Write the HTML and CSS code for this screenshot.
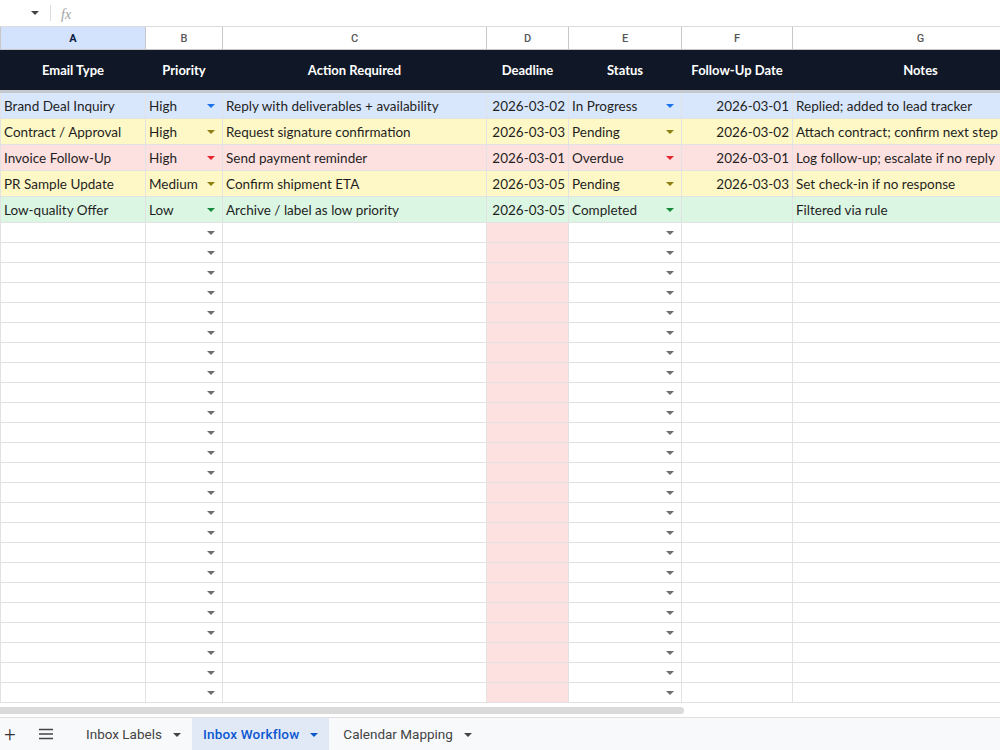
FILE: index.html
```html
<!DOCTYPE html>
<html lang="en">
<head>
    <meta charset="UTF-8">
    <title>Inbox Workflow</title>
    <link rel="stylesheet" href="styles.css">
</head>
<body>
    <div class="formula-bar">
        <span class="name-caret"></span>
        <span class="fx-divider"></span>
        <span class="fx">fx</span>
    </div>

    <div class="sheet">
        <table class="grid">
            <colgroup>
                <col style="width:145px">
                <col style="width:77px">
                <col style="width:264px">
                <col style="width:82px">
                <col style="width:113px">
                <col style="width:111px">
                <col style="width:256px">
            </colgroup>
            <tr class="letters">
                <th class="selected">A</th><th>B</th><th>C</th><th>D</th><th>E</th><th>F</th><th>G</th>
            </tr>
            <tr class="head">
                <th>Email Type</th><th>Priority</th><th>Action Required</th><th>Deadline</th><th>Status</th><th>Follow-Up Date</th><th>Notes</th>
            </tr>
            <tr class="row blue">
                <td>Brand Deal Inquiry</td>
                <td class="dd">High</td>
                <td>Reply with deliverables + availability</td>
                <td class="num">2026-03-02</td>
                <td class="dd">In Progress</td>
                <td class="num">2026-03-01</td>
                <td>Replied; added to lead tracker</td>
            </tr>
            <tr class="row yellow">
                <td>Contract / Approval</td>
                <td class="dd">High</td>
                <td>Request signature confirmation</td>
                <td class="num">2026-03-03</td>
                <td class="dd">Pending</td>
                <td class="num">2026-03-02</td>
                <td>Attach contract; confirm next step</td>
            </tr>
            <tr class="row red">
                <td>Invoice Follow-Up</td>
                <td class="dd">High</td>
                <td>Send payment reminder</td>
                <td class="num">2026-03-01</td>
                <td class="dd">Overdue</td>
                <td class="num">2026-03-01</td>
                <td>Log follow-up; escalate if no reply</td>
            </tr>
            <tr class="row yellow">
                <td>PR Sample Update</td>
                <td class="dd">Medium</td>
                <td>Confirm shipment ETA</td>
                <td class="num">2026-03-05</td>
                <td class="dd">Pending</td>
                <td class="num">2026-03-03</td>
                <td>Set check-in if no response</td>
            </tr>
            <tr class="row green">
                <td>Low-quality Offer</td>
                <td class="dd">Low</td>
                <td>Archive / label as low priority</td>
                <td class="num">2026-03-05</td>
                <td class="dd">Completed</td>
                <td class="num"></td>
                <td>Filtered via rule</td>
            </tr>
            <tr class="empty"><td></td><td class="dd"></td><td></td><td class="due"></td><td class="dd"></td><td></td><td></td></tr>
            <tr class="empty"><td></td><td class="dd"></td><td></td><td class="due"></td><td class="dd"></td><td></td><td></td></tr>
            <tr class="empty"><td></td><td class="dd"></td><td></td><td class="due"></td><td class="dd"></td><td></td><td></td></tr>
            <tr class="empty"><td></td><td class="dd"></td><td></td><td class="due"></td><td class="dd"></td><td></td><td></td></tr>
            <tr class="empty"><td></td><td class="dd"></td><td></td><td class="due"></td><td class="dd"></td><td></td><td></td></tr>
            <tr class="empty"><td></td><td class="dd"></td><td></td><td class="due"></td><td class="dd"></td><td></td><td></td></tr>
            <tr class="empty"><td></td><td class="dd"></td><td></td><td class="due"></td><td class="dd"></td><td></td><td></td></tr>
            <tr class="empty"><td></td><td class="dd"></td><td></td><td class="due"></td><td class="dd"></td><td></td><td></td></tr>
            <tr class="empty"><td></td><td class="dd"></td><td></td><td class="due"></td><td class="dd"></td><td></td><td></td></tr>
            <tr class="empty"><td></td><td class="dd"></td><td></td><td class="due"></td><td class="dd"></td><td></td><td></td></tr>
            <tr class="empty"><td></td><td class="dd"></td><td></td><td class="due"></td><td class="dd"></td><td></td><td></td></tr>
            <tr class="empty"><td></td><td class="dd"></td><td></td><td class="due"></td><td class="dd"></td><td></td><td></td></tr>
            <tr class="empty"><td></td><td class="dd"></td><td></td><td class="due"></td><td class="dd"></td><td></td><td></td></tr>
            <tr class="empty"><td></td><td class="dd"></td><td></td><td class="due"></td><td class="dd"></td><td></td><td></td></tr>
            <tr class="empty"><td></td><td class="dd"></td><td></td><td class="due"></td><td class="dd"></td><td></td><td></td></tr>
            <tr class="empty"><td></td><td class="dd"></td><td></td><td class="due"></td><td class="dd"></td><td></td><td></td></tr>
            <tr class="empty"><td></td><td class="dd"></td><td></td><td class="due"></td><td class="dd"></td><td></td><td></td></tr>
            <tr class="empty"><td></td><td class="dd"></td><td></td><td class="due"></td><td class="dd"></td><td></td><td></td></tr>
            <tr class="empty"><td></td><td class="dd"></td><td></td><td class="due"></td><td class="dd"></td><td></td><td></td></tr>
            <tr class="empty"><td></td><td class="dd"></td><td></td><td class="due"></td><td class="dd"></td><td></td><td></td></tr>
            <tr class="empty"><td></td><td class="dd"></td><td></td><td class="due"></td><td class="dd"></td><td></td><td></td></tr>
            <tr class="empty"><td></td><td class="dd"></td><td></td><td class="due"></td><td class="dd"></td><td></td><td></td></tr>
            <tr class="empty"><td></td><td class="dd"></td><td></td><td class="due"></td><td class="dd"></td><td></td><td></td></tr>
            <tr class="empty"><td></td><td class="dd"></td><td></td><td class="due"></td><td class="dd"></td><td></td><td></td></tr>
        </table>
    </div>

    <div class="hscroll">
        <div class="thumb"></div>
    </div>

    <div class="tabbar">
        <span class="tab-icon plus">+</span>
        <span class="tab-icon menu">
            <svg width="14" height="12" viewBox="0 0 14 12"><path d="M0 1.5h14M0 6h14M0 10.5h14" stroke="#444" stroke-width="1.6"/></svg>
        </span>
        <div class="tab">Inbox Labels <span class="tab-caret"></span></div>
        <div class="tab active">Inbox Workflow <span class="tab-caret"></span></div>
        <div class="tab">Calendar Mapping <span class="tab-caret"></span></div>
    </div>
</body>
</html>
```

FILE: styles.css
```css
body {
    margin: 0;
    width: 1000px;
    height: 750px;
    overflow: hidden;
    background-color: #fff;
    font-family: Lato, "Open Sans", sans-serif;
    display: flex;
    flex-direction: column;
}

/* formula bar */
.formula-bar {
    height: 26px;
    flex-shrink: 0;
    display: flex;
    align-items: center;
    border-bottom: 1px solid #dadce0;
}
.name-caret {
    width: 0;
    height: 0;
    margin-left: 31px;
    border-left: 4px solid transparent;
    border-right: 4px solid transparent;
    border-top: 4px solid #444;
}
.fx-divider {
    width: 1px;
    height: 16px;
    margin-left: 11px;
    background-color: #dadce0;
}
.fx {
    margin-left: 10px;
    margin-top: 3px;
    font-family: "Liberation Serif", serif;
    font-style: italic;
    font-size: 14px;
    color: #a0a0a0;
}

/* grid */
.sheet {
    height: 678px;
    flex-shrink: 0;
    overflow: hidden;
}
.grid {
    border-collapse: collapse;
    table-layout: fixed;
    width: 1048px;
}
.grid td, .grid th {
    border: 1px solid #e2e2e2;
    padding: 0 3px;
    white-space: nowrap;
    overflow: hidden;
}
.letters th {
    height: 22px;
    font-family: Roboto, sans-serif;
    font-size: 11px;
    font-weight: 500;
    color: #575757;
    border-color: #c7c7c7;
    border-top: none;
}
.letters th.selected {
    background-color: #d3e3fd;
    color: #0b1e44;
    font-weight: 700;
}
.head th {
    height: 40px;
    background-color: #101827;
    color: #fff;
    font-size: 13px;
    font-weight: 700;
    border-color: #101827;
    border-bottom: 3px solid #c4c7cc;
}
.row td {
    height: 24px;
    padding-top: 1px;
    font-size: 13.5px;
    color: #1f1f1f;
}
.row td.num {
    text-align: right;
}
.empty td {
    height: 19px;
}
.empty td.due {
    background-color: #fde1e1;
}

.blue td { background-color: #d9e7fc; }
.yellow td { background-color: #fef8c6; }
.red td { background-color: #fde0e0; }
.green td { background-color: #dbf6e3; }

/* dropdown chips */
.dd {
    position: relative;
}
.dd::after {
    content: "";
    position: absolute;
    right: 7px;
    top: 50%;
    margin-top: -2px;
    border-left: 4px solid transparent;
    border-right: 4px solid transparent;
    border-top: 4px solid #6e6e6e;
}
.blue .dd::after { border-top-color: #1a73e8; }
.yellow .dd::after { border-top-color: #8d7f12; }
.red .dd::after { border-top-color: #e8252f; }
.green .dd::after { border-top-color: #188a3c; }

/* horizontal scrollbar */
.hscroll {
    height: 10px;
    flex-shrink: 0;
    padding-top: 2px;
    border-bottom: 1px solid #e0e0e0;
}
.thumb {
    width: 684px;
    height: 7px;
    background-color: #dadada;
    border-radius: 0 4px 4px 0;
}

/* sheet tabs */
.tabbar {
    flex: 1;
    display: flex;
    align-items: stretch;
    background-color: #f8f9fb;
    font-family: Roboto, sans-serif;
    font-size: 13.5px;
    color: #444;
}
.tab-icon {
    display: flex;
    align-items: center;
    justify-content: center;
}
.plus {
    width: 20px;
    font-size: 20px;
    font-weight: 300;
    color: #333;
}
.menu {
    width: 52px;
}
.tab {
    display: flex;
    align-items: center;
    gap: 11px;
    padding: 0 11px 0 14px;
}
.tab.active {
    background-color: #e1e9f7;
    color: #0b57d0;
    font-weight: 500;
    padding-left: 11px;
    letter-spacing: 0.2px;
}
.tab-caret {
    width: 0;
    height: 0;
    margin-top: 1px;
    border-left: 4px solid transparent;
    border-right: 4px solid transparent;
    border-top: 4px solid #444;
}
.tab.active .tab-caret {
    border-top-color: #0b57d0;
}
```
